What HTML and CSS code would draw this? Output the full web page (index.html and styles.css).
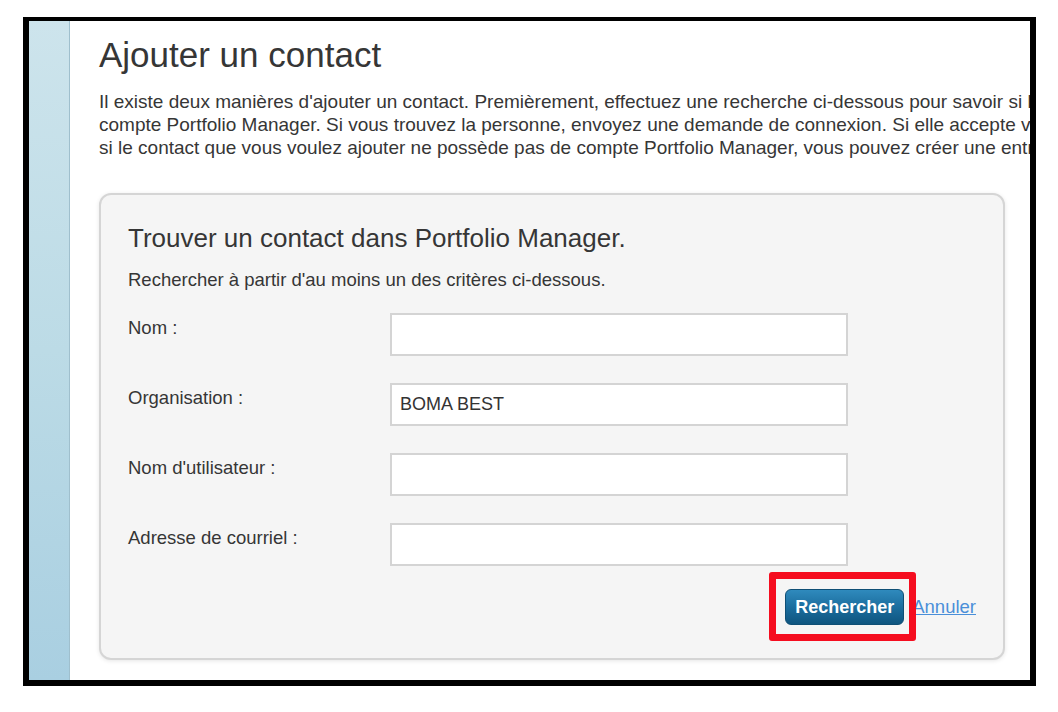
FILE: index.html
```html
<!DOCTYPE html>
<html lang="fr">
<head>
<meta charset="utf-8">
<title>Ajouter un contact</title>
<link rel="stylesheet" href="styles.css">
</head>
<body>
<div class="frame">
  <div class="sidebar"></div>
  <main class="main">
    <h1 class="page-title">Ajouter un contact</h1>
    <p class="intro">Il existe deux manières d'ajouter un contact. Premièrement, effectuez une recherche ci-dessous pour savoir si la personne possède déjà un<br>compte Portfolio Manager. Si vous trouvez la personne, envoyez une demande de connexion. Si elle accepte votre demande, elle sera ajoutée<br>si le contact que vous voulez ajouter ne possède pas de compte Portfolio Manager, vous pouvez créer une entrée pour ce contact.</p>
    <section class="panel">
      <h2 class="panel-title">Trouver un contact dans Portfolio Manager.</h2>
      <p class="panel-sub">Rechercher à partir d'au moins un des critères ci-dessous.</p>
      <div class="form">
        <label class="label" for="nom">Nom :</label>
        <input class="field" id="nom" type="text">
        <label class="label" for="org">Organisation :</label>
        <input class="field" id="org" type="text" value="BOMA BEST">
        <label class="label" for="user">Nom d'utilisateur :</label>
        <input class="field" id="user" type="text">
        <label class="label" for="mail">Adresse de courriel :</label>
        <input class="field" id="mail" type="text">
      </div>
      <div class="actions">
        <span class="btn-wrap">
          <button class="btn" type="button">Rechercher</button>
          <span class="highlight"></span>
        </span>
        <a class="cancel" href="#">Annuler</a>
      </div>
    </section>
  </main>
</div>
</body>
</html>
```

FILE: styles.css
```css
html, body {
  margin: 0;
  padding: 0;
  background: #ffffff;
}

body {
  font-family: "Liberation Sans", Arial, sans-serif;
  color: #333333;
  padding: 17px 0 0 23px;
}

.frame {
  box-sizing: border-box;
  width: 1013px;
  height: 669px;
  border-style: solid;
  border-color: #000000;
  border-width: 4px 6px 6px 6px;
  display: flex;
  overflow: hidden;
  background: #ffffff;
}

.sidebar {
  flex: 0 0 40px;
  background: linear-gradient(to bottom, #cde4ec 0%, #bcdbe6 50%, #a9cfe1 100%);
  border-right: 1px solid #9fbfcd;
}

.main {
  flex: 1;
  min-width: 0;
  padding: 14px 25px 0 29px;
  overflow: hidden;
}

.page-title {
  margin: 0;
  font-weight: normal;
  font-size: 35px;
  line-height: 40px;
  color: #363636;
}

.intro {
  margin: 15px 0 0 0;
  font-size: 19px;
  line-height: 23px;
  white-space: nowrap;
  color: #363636;
}

.panel {
  box-sizing: border-box;
  width: 906px;
  margin-top: 34px;
  padding: 28px 27px 33px 27px;
  background: #f5f5f5;
  border: 2px solid #d5d5d5;
  border-radius: 12px;
  box-shadow: 0 1px 4px rgba(0, 0, 0, 0.1);
}

.panel-title {
  margin: 0;
  font-weight: normal;
  font-size: 26px;
  line-height: 30px;
  color: #363636;
}

.panel-sub {
  margin: 16px 0 0 0;
  font-size: 18.5px;
  line-height: 22px;
  color: #363636;
}

.form {
  display: grid;
  grid-template-columns: 262px 458px;
  row-gap: 27px;
  margin-top: 22px;
}

.label {
  font-size: 18.5px;
  line-height: 22px;
  padding-top: 4px;
  color: #363636;
}

.field {
  box-sizing: border-box;
  width: 458px;
  height: 43px;
  margin: 0;
  padding: 0 8px;
  border: 2px solid #d4d4d4;
  background: #ffffff;
  font-family: "Liberation Sans", Arial, sans-serif;
  font-size: 18px;
  color: #333333;
  outline: none;
}

.actions {
  display: flex;
  justify-content: flex-end;
  align-items: center;
  gap: 8px;
  margin-top: 23px;
}

.btn-wrap {
  position: relative;
  display: inline-flex;
}

.btn {
  box-sizing: border-box;
  width: 119px;
  height: 36px;
  padding: 0;
  border: 1px solid #0f4f75;
  border-radius: 6px;
  background: linear-gradient(to bottom, #2f8abd 0%, #1a6b9b 55%, #0f557f 100%);
  color: #ffffff;
  font-family: "Liberation Sans", Arial, sans-serif;
  font-weight: bold;
  font-size: 18px;
  cursor: pointer;
}

.highlight {
  position: absolute;
  left: -16px;
  top: -17px;
  width: 147px;
  height: 69px;
  box-sizing: border-box;
  border: 7px solid #f50d1f;
  border-radius: 3px;
  pointer-events: none;
}

.cancel {
  font-size: 18.5px;
  line-height: 22px;
  color: #4a8fd9;
  text-decoration: underline;
}
```
